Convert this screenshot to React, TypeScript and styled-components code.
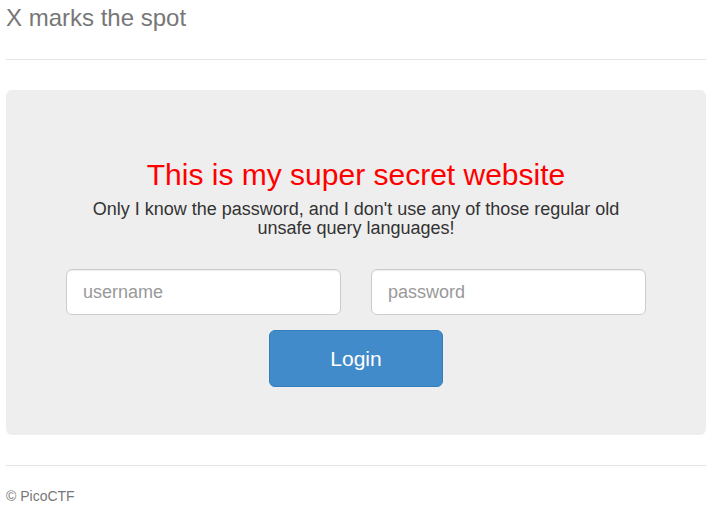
import React from "react";
import styled, { createGlobalStyle } from "styled-components";

const Global = createGlobalStyle`
  html, body { margin: 0; padding: 0; background: #fff; }
  body { font-family: "Liberation Sans", Arial, Helvetica, sans-serif; color: #333; font-size: 14px; line-height: 1.42857; }
  * { box-sizing: border-box; }
`;

const Page = styled.div`
  padding: 0 6px;
  display: flex;
  flex-direction: column;
`;

const Header = styled.header`
  padding-top: 5px;
  padding-bottom: 28px;
  border-bottom: 1px solid #e5e5e5;
`;

const Brand = styled.h3`
  margin: 0;
  font-size: 24px;
  line-height: 26px;
  font-weight: 400;
  color: #777;
`;

const Jumbotron = styled.section`
  margin-top: 30px;
  background: #eee;
  border-radius: 6px;
  height: 345px;
  padding: 68px 60px 0;
  display: flex;
  flex-direction: column;
  align-items: center;
  text-align: center;
`;

const Title = styled.h3`
  margin: 0;
  font-size: 30px;
  line-height: 33px;
  font-weight: 400;
  color: #f00;
`;

const Lead = styled.p`
  margin: 9px 0 0;
  font-size: 18px;
  line-height: 19px;
  color: #333;
`;

const Form = styled.form`
  margin-top: 31px;
  width: 100%;
  display: flex;
  flex-direction: column;
  align-items: center;
  gap: 15px;
`;

const Fields = styled.div`
  width: 100%;
  display: grid;
  grid-template-columns: 1fr 1fr;
  gap: 30px;
`;

const Input = styled.input`
  height: 46px;
  width: 100%;
  padding: 10px 16px;
  font-family: inherit;
  font-size: 18px;
  color: #555;
  background: #fff;
  border: 1px solid #ccc;
  border-radius: 6px;
  box-shadow: inset 0 1px 1px rgba(0, 0, 0, 0.075);
  outline: none;
  &::placeholder { color: #999; }
`;

const Button = styled.button`
  width: 174px;
  height: 57px;
  padding: 0;
  font-family: inherit;
  font-size: 21px;
  color: #fff;
  background: #428bca;
  border: 1px solid #357ebd;
  border-radius: 6px;
  cursor: pointer;
`;

const Footer = styled.footer`
  margin-top: 30px;
  border-top: 1px solid #e5e5e5;
  padding-top: 20px;
`;

const FooterText = styled.p`
  margin: 0;
  font-size: 14px;
  line-height: 20px;
  color: #777;
`;

export default function App() {
  return (
    <>
      <Global />
      <Page>
        <Header>
          <Brand>X marks the spot</Brand>
        </Header>
        <Jumbotron>
          <Title>This is my super secret website</Title>
          <Lead>
            Only I know the password, and I don't use any of those regular old unsafe query languages!
          </Lead>
          <Form onSubmit={(e) => e.preventDefault()}>
            <Fields>
              <Input type="text" placeholder="username" />
              <Input type="password" placeholder="password" />
            </Fields>
            <Button type="submit">Login</Button>
          </Form>
        </Jumbotron>
        <Footer>
          <FooterText>© PicoCTF</FooterText>
        </Footer>
      </Page>
    </>
  );
}
